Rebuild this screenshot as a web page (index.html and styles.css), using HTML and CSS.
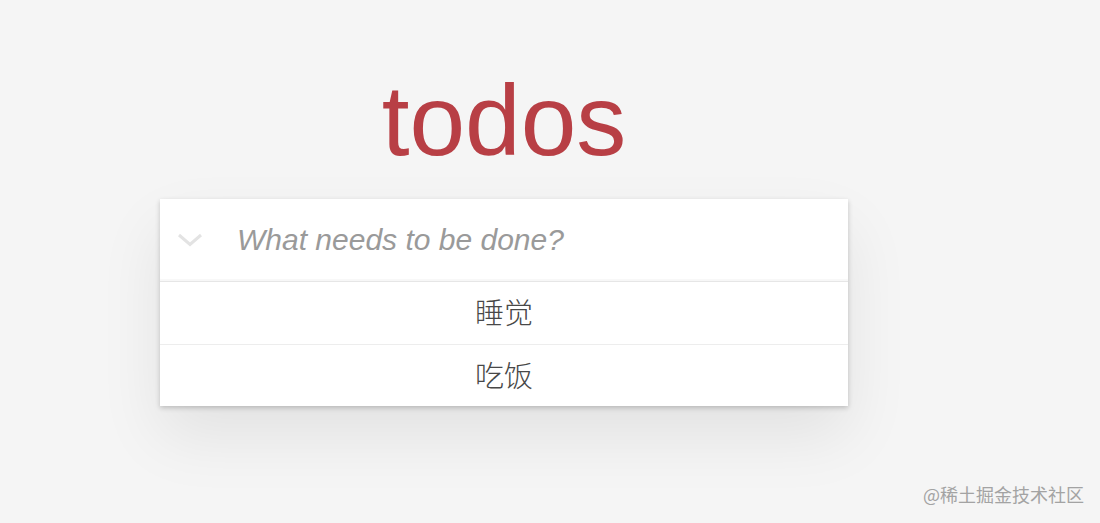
FILE: index.html
```html
<!DOCTYPE html>
<html lang="zh">
<head>
  <meta charset="UTF-8" />
  <meta name="viewport" content="width=device-width, initial-scale=1.0"/>
  <title>todos</title>
  <link rel="stylesheet" href="styles.css">
</head>
<body>
  <section class="todoapp">
    <h1>todos</h1>
    <div class="card">
      <header class="header">
        <label class="toggle-all" for="toggleAll">
          <svg width="26" height="14" viewBox="0 0 26 14">
            <path d="M2 2 L13 11.5 L24 2" fill="none" stroke="#e3e3e3" stroke-width="3"/>
          </svg>
        </label>
        <input id="toggleAll" type="checkbox" hidden />
        <input class="new-todo" type="text" placeholder="What needs to be done?" />
      </header>
      <ul class="todo-list">
        <li>睡觉</li>
        <li>吃饭</li>
      </ul>
    </div>
  </section>

  <div class="watermark">@稀土掘金技术社区</div>
</body>
</html>
```

FILE: styles.css
```css
body {
  font-family: 'Liberation Sans', Arial, 'Noto Sans CJK SC', sans-serif;
  background: #f5f5f5;
  margin: 0;
  padding: 0;
  height: 523px;
  overflow: hidden;
}

.todoapp {
  width: 688px;
  margin-left: 160px;
}

h1 {
  margin: 70px 0 29px;
  font-size: 100px;
  line-height: 100px;
  font-weight: normal;
  text-align: center;
  color: #b83f45;
}

.card {
  background: #fff;
  box-shadow: 0 2px 5px rgba(0, 0, 0, 0.2), 0 30px 60px rgba(0, 0, 0, 0.08);
}

.header {
  display: flex;
  align-items: center;
  height: 82px;
  border-bottom: 1px solid #e6e6e6;
  box-shadow: inset 0 -2px 1px rgba(0, 0, 0, 0.03);
}

.toggle-all {
  display: flex;
  width: 75px;
  padding-left: 17px;
  box-sizing: border-box;
  cursor: pointer;
}

.new-todo {
  flex: 1;
  border: none;
  outline: none;
  background: transparent;
  padding: 0 20px 0 2px;
  font-family: 'Liberation Sans', Arial, sans-serif;
  font-size: 30px;
  color: #4d4d4d;
}

.new-todo::placeholder {
  font-style: italic;
  color: #9a9a9a;
}

.todo-list {
  list-style: none;
  margin: 0;
  padding: 0;
}

.todo-list li {
  height: 62px;
  line-height: 59px;
  padding-bottom: 3px;
  box-sizing: border-box;
  text-align: center;
  font-family: 'Noto Sans CJK SC', sans-serif;
  font-weight: 300;
  font-size: 29px;
  color: #484848;
}

.todo-list li + li {
  border-top: 1px solid #ededed;
}

.watermark {
  position: absolute;
  right: 16px;
  bottom: 16px;
  font-family: 'Noto Sans CJK SC', sans-serif;
  font-size: 18px;
  color: #a3a3a3;
}
```
